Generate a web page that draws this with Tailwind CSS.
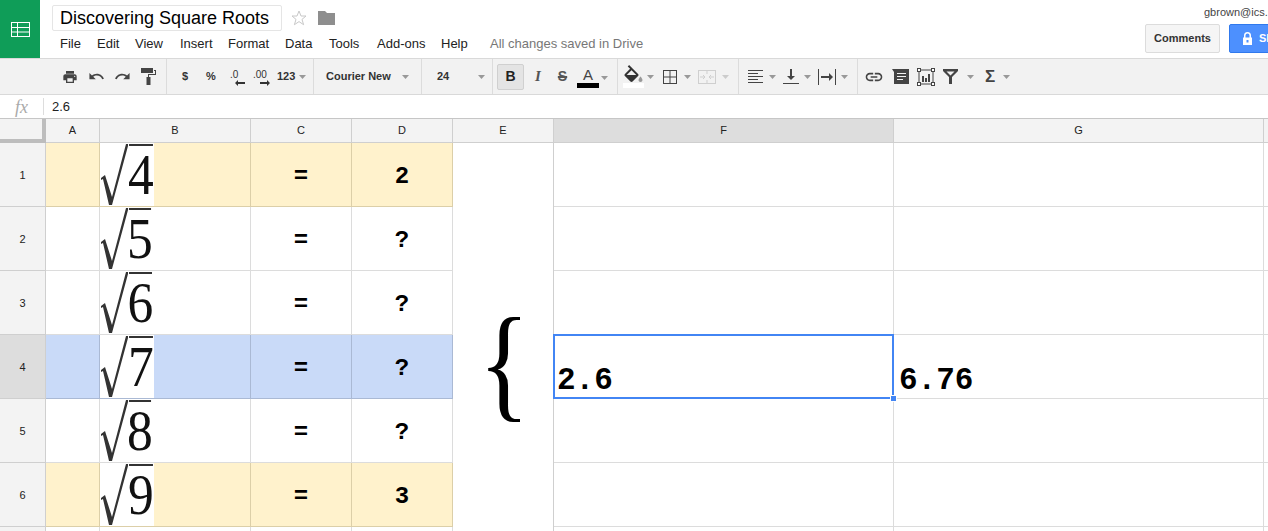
<!DOCTYPE html>
<html>
<head>
    <meta charset="UTF-8" />
    <title>Discovering Square Roots</title>
    <script src="https://cdn.jsdelivr.net/npm/@tailwindcss/browser@4"></script>
</head>

<body class="w-[1268px] h-[531px] overflow-hidden bg-white font-['Liberation_Sans',sans-serif] text-[#222]">

    <!-- Title bar -->
    <header class="flex h-[58px] relative">
        <div class="w-[40px] h-[58px] bg-[#0f9d58] flex items-center justify-center">
            <svg class="w-[19px] h-[15px]" viewBox="0 0 19 15" fill="none" stroke="#fff" stroke-width="1"><rect x="0.5" y="0.5" width="18" height="14"/><path d="M0 5.5h19M0 10h19M6.5 0v15"/></svg>
        </div>
        <div class="flex-1 pl-[12px]">
            <div class="flex items-center pt-[5px]">
                <div class="w-[230px] h-[26px] border border-[#e5e5e5] rounded-[2px] pl-[7px] text-[18px] leading-[24px] text-black">Discovering Square Roots</div>
                <svg class="w-[16px] h-[16px] ml-[9px]" viewBox="0 0 16 16" fill="none" stroke="#c8c8c8" stroke-width="1"><path d="M8 1l2 5h5l-4 3.4 1.6 5.3L8 11.6l-4.6 3.1L5 9.400 1 6h5z"/></svg>
                <svg class="w-[17px] h-[14px] ml-[11px]" viewBox="0 0 17 14" fill="#8e8e8e"><path d="M0 0h7l2 2h8v12H0z"/></svg>
            </div>
            <nav class="flex text-[13px] leading-[15px] mt-[5px] pl-[8px] text-[#222]">
                <span class="w-[37px]">File</span>
                <span class="w-[38px]">Edit</span>
                <span class="w-[45px]">View</span>
                <span class="w-[48px]">Insert</span>
                <span class="w-[57px]">Format</span>
                <span class="w-[44px]">Data</span>
                <span class="w-[48px]">Tools</span>
                <span class="w-[64px]">Add-ons</span>
                <span class="w-[49px]">Help</span>
                <span class="text-[#777]">All changes saved in Drive</span>
            </nav>
        </div>
        <div class="absolute left-[1204px] top-[6px] text-[11px] leading-[13px] text-[#444] whitespace-nowrap">gbrown@ics.mit.edu</div>
        <div class="absolute left-[1145px] top-[24px] w-[75px] h-[29px] bg-[#f5f5f5] border border-[#dcdcdc] rounded-[2px] text-[11px] font-bold leading-[27px] text-center text-[#333]">Comments</div>
        <div class="absolute left-[1229px] top-[24px] w-[70px] h-[29px] bg-[#4d90fe] border border-[#3079ed] rounded-[2px] text-[11px] font-bold leading-[27px] text-white flex items-center pl-[12px]">
            <svg class="w-[11px] h-[13px] mr-[6px]" viewBox="0 0 11 13" fill="#fff"><path d="M1 5.500h1V3.500a3.500 3.500 0 0 1 7 0v2h1v7.500H1zM3.500 5.500h4V3.500a2 2 0 0 0-4 0zM4.500 8h2v2.500h-2z" fill-rule="evenodd"/></svg>
            Share
        </div>
    </header>

    <!-- Toolbar -->
    <div class="flex h-[37px] border-y border-[#d9d9d9] bg-[#f2f2f2] text-[#333]">
        <div class="w-[167px] flex items-center pl-[62px] border-r border-[#dcdcdc]">
            <svg class="w-[16px] h-[16px]" viewBox="0 0 24 24" fill="#444"><path d="M19 8H5c-1.660 0-3 1.340-3 3v6h4v4h12v-4h4v-6c0-1.660-1.340-3-3-3zm-3 11H8v-5h8v5zm3-7c-.55 0-1-.45-1-1s.45-1 1-1 1 .45 1 1-.45 1-1 1zm-1-9H6v4h12V3z"/></svg>
            <svg class="w-[17px] h-[17px] ml-[10px]" viewBox="0 0 24 24" fill="#444"><path d="M12.500 8c-2.650 0-5.050.99-6.900 2.600L2 7v9h9l-3.620-3.620c1.390-1.160 3.160-1.880 5.120-1.880 3.540 0 6.550 2.310 7.600 5.500l2.370-.78C21.080 11.030 17.150 8 12.500 8z"/></svg>
            <svg class="w-[17px] h-[17px] ml-[9px]" viewBox="0 0 24 24" fill="#444"><path d="M18.400 10.600C16.550 8.990 14.150 8 11.500 8c-4.650 0-8.580 3.030-9.960 7.220L3.900 16c1.050-3.190 4.050-5.500 7.600-5.500 1.950 0 3.730.72 5.120 1.880L13 16h9V7l-3.600 3.600z"/></svg>
            <svg class="w-[15px] h-[17px] ml-[10px]" viewBox="0 0 15 17" fill="#444"><path d="M0 0h12v5H0zM13 2h2v5H8v2h1.500v8h-4V9H7V6h7V3h-1z"/></svg>
        </div>
        <div class="w-[147px] flex items-center pl-[15px] border-r border-[#dcdcdc] text-[11px] font-bold">
            <span class="w-[6px]">$</span>
            <span class="ml-[18px] w-[10px]">%</span>
            <span class="relative ml-[14px] w-[16px] h-[18px] font-normal text-[10px] leading-[14px]">.0
                <svg class="absolute left-[5px] top-[12px] w-[10px] h-[6px]" viewBox="0 0 10 6" fill="#333"><path d="M0 3l3-3v2h7v2H3v2z"/></svg>
            </span>
            <span class="relative ml-[7px] w-[18px] h-[18px] font-normal text-[10px] leading-[14px]">.00
                <svg class="absolute left-[7px] top-[12px] w-[10px] h-[6px]" viewBox="0 0 10 6" fill="#333"><path d="M10 3L7 0v2H0v2h7v2z"/></svg>
            </span>
            <span class="ml-[6px] w-[20px]">123</span>
            <svg class="w-[7px] h-[4px] ml-[2px]" viewBox="0 0 7 4" fill="#999"><path d="M0 0h7L3.500 4z"/></svg>
        </div>
        <div class="w-[108px] flex items-center pl-[12px] border-r border-[#dcdcdc] text-[11px] font-bold">
            <span class="w-[76px]">Courier New</span>
            <svg class="w-[7px] h-[4px]" viewBox="0 0 7 4" fill="#999"><path d="M0 0h7L3.500 4z"/></svg>
        </div>
        <div class="w-[71px] flex items-center pl-[15px] border-r border-[#dcdcdc] text-[11px] font-bold">
            <span class="w-[41px]">24</span>
            <svg class="w-[7px] h-[4px]" viewBox="0 0 7 4" fill="#999"><path d="M0 0h7L3.500 4z"/></svg>
        </div>
        <div class="w-[125px] flex items-center pl-[4px] border-r border-[#dcdcdc]">
            <span class="w-[27px] h-[26px] border border-[#d0d0d0] rounded-[2px] bg-[#e4e4e4] text-[14px] font-bold flex items-center justify-center text-[#222]">B</span>
            <span class="w-[10px] ml-[9px] text-[15px] font-bold italic font-['Liberation_Serif',serif] text-[#555] text-center">I</span>
            <span class="w-[13px] ml-[13px] text-[14px] font-bold text-[#555] text-center line-through decoration-2 decoration-[#555]">S</span>
            <span class="flex flex-col items-center w-[22px] ml-[8px]">
                <span class="text-[15px] leading-[17px] text-[#444]">A</span>
                <span class="w-[22px] h-[5px] bg-black"></span>
            </span>
            <svg class="w-[7px] h-[4px] ml-[2px] mt-[3px]" viewBox="0 0 7 4" fill="#999"><path d="M0 0h7L3.500 4z"/></svg>
        </div>
        <div class="w-[121px] flex items-center pl-[5px] border-r border-[#dcdcdc]">
            <span class="flex flex-col items-center w-[21px]">
                <svg class="w-[21px] h-[18px]" viewBox="2 0 20 18" fill="#333"><path d="M16.560 8.940L7.620 0 6.210 1.410l2.380 2.380-5.150 5.150c-.59.59-.59 1.540 0 2.120l5.500 5.500c.29.29.68.44 1.060.44s.77-.15 1.060-.44l5.500-5.500c.59-.58.59-1.530 0-2.120zM5.210 10L10 5.210 14.790 10H5.210z"/><path fill="#999" d="M19 11.500s-2 2.170-2 3.500c0 1.100.9 2 2 2s2-.9 2-2c0-1.330-2-3.500-2-3.500z"/></svg>
                <span class="w-[21px] h-[5px] bg-white"></span>
            </span>
            <svg class="w-[7px] h-[4px] ml-[3px]" viewBox="0 0 7 4" fill="#999"><path d="M0 0h7L3.500 4z"/></svg>
            <svg class="w-[14px] h-[14px] ml-[9px]" viewBox="0 0 14 14" fill="none" stroke="#444"><rect x="0.500" y="0.500" width="13" height="13"/><path d="M7 0v14M0 7h14"/></svg>
            <svg class="w-[7px] h-[4px] ml-[7px]" viewBox="0 0 7 4" fill="#999"><path d="M0 0h7L3.500 4z"/></svg>
            <svg class="w-[18px] h-[14px] ml-[7px]" viewBox="0 0 18 14" fill="none" stroke="#cfcfcf"><rect x="0.500" y="0.500" width="17" height="13"/><path d="M9 0v4M9 10v4M2 7h5M11 7h5M5 5l2 2-2 2M13 5l-2 2 2 2"/></svg>
            <svg class="w-[7px] h-[4px] ml-[6px]" viewBox="0 0 7 4" fill="#ccc"><path d="M0 0h7L3.500 4z"/></svg>
        </div>
        <div class="w-[119px] flex items-center pl-[9px] border-r border-[#dcdcdc]">
            <svg class="w-[15px] h-[13px]" viewBox="0 0 15 13" fill="none" stroke="#444"><path d="M0 .5h15M0 3.500h10M0 6.500h15M0 9.500h10M0 12.500h15"/></svg>
            <svg class="w-[7px] h-[4px] ml-[6px]" viewBox="0 0 7 4" fill="#999"><path d="M0 0h7L3.500 4z"/></svg>
            <svg class="w-[16px] h-[15px] ml-[7px]" viewBox="0 0 16 15" fill="#444"><path d="M7 0h2v7h3l-4 4-4-4h3zM0 14h16v1H0z"/></svg>
            <svg class="w-[7px] h-[4px] ml-[5px]" viewBox="0 0 7 4" fill="#999"><path d="M0 0h7L3.500 4z"/></svg>
            <svg class="w-[18px] h-[16px] ml-[7px]" viewBox="0 0 18 16" fill="#444"><path d="M0 0h1v16H0zM17 0h1v16h-1zM3 7h8V4l4 4-4 4V9H3z"/></svg>
            <svg class="w-[7px] h-[4px] ml-[5px]" viewBox="0 0 7 4" fill="#999"><path d="M0 0h7L3.500 4z"/></svg>
        </div>
        <div class="flex-1 flex items-center pl-[6px]">
            <svg class="w-[20px] h-[20px]" viewBox="0 0 24 24" fill="#444"><path d="M3.900 12c0-1.710 1.390-3.100 3.100-3.100h4V7H7c-2.760 0-5 2.240-5 5s2.240 5 5 5h4v-1.900H7c-1.710 0-3.100-1.390-3.100-3.100zM8 13h8v-2H8v2zm9-6h-4v1.900h4c1.710 0 3.100 1.390 3.100 3.100s-1.390 3.100-3.100 3.100h-4V17h4c2.760 0 5-2.240 5-5s-2.240-5-5-5z"/></svg>
            <svg class="w-[17px] h-[15px] ml-[8px]" viewBox="0 0 17 15" fill="#444" fill-rule="evenodd"><path d="M0 0h17v15H2V3zM5 4v1h9V4zM5 7v1h9V7zM5 10v1h6v-1z"/></svg>
            <svg class="w-[18px] h-[18px] ml-[8px]" viewBox="0 0 18 18" fill="none" stroke="#444"><rect x="2" y="2" width="14" height="14"/><path fill="#444" stroke="none" d="M5 8h2v6H5zM8 10h2v4H8zM11 6h2v8h-2z"/><rect x="0.500" y="0.500" width="3" height="3" fill="#fff"/><rect x="14.500" y="0.500" width="3" height="3" fill="#fff"/><rect x="0.500" y="14.500" width="3" height="3" fill="#fff"/><rect x="14.500" y="14.500" width="3" height="3" fill="#fff"/></svg>
            <svg class="w-[15px] h-[15px] ml-[8px]" viewBox="0 0 15 15" fill="#444" fill-rule="evenodd"><path d="M0 0h15v2L9 8v7H6V8L0 2zM3.500 2.500l4 4 4-4z"/></svg>
            <svg class="w-[7px] h-[4px] ml-[9px]" viewBox="0 0 7 4" fill="#999"><path d="M0 0h7L3.500 4z"/></svg>
            <span class="w-[11px] ml-[11px] text-[17px] font-bold leading-none text-[#444]">Σ</span>
            <svg class="w-[7px] h-[4px] ml-[7px]" viewBox="0 0 7 4" fill="#999"><path d="M0 0h7L3.500 4z"/></svg>
        </div>
    </div>

    <!-- Formula bar -->
    <div class="flex items-center h-[24px] border-b border-[#c6c6c6] bg-white">
        <span class="w-[43px] pl-[15px] font-['Liberation_Serif',serif] italic text-[18px] leading-[20px] text-[#aaa]">fx</span>
        <span class="w-px h-[17px] bg-[#ddd]"></span>
        <span class="pl-[8px] text-[13px] text-[#222]">2.6</span>
    </div>

    <!-- Grid -->
    <div class="grid grid-cols-[46px_54px_151px_101px_101px_101px_340px_370px_4px] grid-rows-[24px_repeat(7,64px)] text-center">
        <!-- column headers -->
        <div class="bg-[#f3f3f3] border-r-4 border-b-4 border-[#bdbdbd]"></div>
        <div class="bg-[#f3f3f3] border-r border-b border-[#cfcfcf] text-[11px] leading-[23px] text-[#222]">A</div>
        <div class="bg-[#f3f3f3] border-r border-b border-[#cfcfcf] text-[11px] leading-[23px] text-[#222]">B</div>
        <div class="bg-[#f3f3f3] border-r border-b border-[#cfcfcf] text-[11px] leading-[23px] text-[#222]">C</div>
        <div class="bg-[#f3f3f3] border-r border-b border-[#cfcfcf] text-[11px] leading-[23px] text-[#222]">D</div>
        <div class="bg-[#f3f3f3] border-r border-b border-[#cfcfcf] text-[11px] leading-[23px] text-[#222]">E</div>
        <div class="bg-[#dddddd] border-r border-b border-[#cfcfcf] text-[11px] leading-[23px] text-[#222]">F</div>
        <div class="bg-[#f3f3f3] border-r border-b border-[#cfcfcf] text-[11px] leading-[23px] text-[#222]">G</div>
        <div class="bg-[#f3f3f3] border-b border-[#cfcfcf]"></div>

        <!-- row 1 -->
        <div class="bg-[#f3f3f3] border-r border-b border-[#cfcfcf] text-[11px] leading-[64px]">1</div>
        <div class="bg-[#fff2cc] border-r border-b border-[#dccfa8]"></div>
        <div class="bg-[#fff2cc] border-r border-b border-[#dccfa8]">
            <div class="flex h-full w-[54px] bg-white overflow-hidden">
                <svg class="w-[28px] h-[63px] shrink-0" viewBox="0 0 28 63" fill="#333"><path d="M1 35l4-3 7 22L26 1h2v2L12 62H9L3 36l-2 1z"/></svg>
                <div class="w-[26px] h-[62px] mt-px border-t-2 border-[#333] flex justify-center font-['Liberation_Serif',serif] text-[56px] leading-[58px] text-[#111] scale-x-[0.92]">4</div>
            </div>
        </div>
        <div class="bg-[#fff2cc] border-r border-b border-[#dccfa8] font-['Liberation_Mono',monospace] font-bold text-[24px] leading-[67px] text-black">=</div>
        <div class="bg-[#fff2cc] border-r border-b border-[#dccfa8] font-['Liberation_Mono',monospace] font-bold text-[24px] leading-[67px] text-black">2</div>
        <div class="border-r border-[#cfcfcf]"></div>
        <div class="border-r border-b border-[#dcdcdc]"></div>
        <div class="border-r border-b border-[#dcdcdc]"></div>
        <div class="border-b border-[#dcdcdc]"></div>

        <!-- row 2 -->
        <div class="bg-[#f3f3f3] border-r border-b border-[#cfcfcf] text-[11px] leading-[64px]">2</div>
        <div class="border-r border-b border-[#dcdcdc]"></div>
        <div class="border-r border-b border-[#dcdcdc]">
            <div class="flex h-full w-[54px] bg-white overflow-hidden">
                <svg class="w-[28px] h-[63px] shrink-0" viewBox="0 0 28 63" fill="#333"><path d="M1 35l4-3 7 22L26 1h2v2L12 62H9L3 36l-2 1z"/></svg>
                <div class="w-[24px] h-[62px] mt-px border-t-2 border-[#333] flex justify-center font-['Liberation_Serif',serif] text-[56px] leading-[58px] text-[#111] scale-x-[0.92]">5</div>
            </div>
        </div>
        <div class="border-r border-b border-[#dcdcdc] font-['Liberation_Mono',monospace] font-bold text-[24px] leading-[67px] text-black">=</div>
        <div class="border-r border-b border-[#dcdcdc] font-['Liberation_Mono',monospace] font-bold text-[24px] leading-[67px] text-black">?</div>
        <div class="border-r border-[#cfcfcf]"></div>
        <div class="border-r border-b border-[#dcdcdc]"></div>
        <div class="border-r border-b border-[#dcdcdc]"></div>
        <div class="border-b border-[#dcdcdc]"></div>

        <!-- row 3 -->
        <div class="bg-[#f3f3f3] border-r border-b border-[#cfcfcf] text-[11px] leading-[64px]">3</div>
        <div class="border-r border-b border-[#dcdcdc]"></div>
        <div class="border-r border-b border-[#dcdcdc]">
            <div class="flex h-full w-[54px] bg-white overflow-hidden">
                <svg class="w-[28px] h-[63px] shrink-0" viewBox="0 0 28 63" fill="#333"><path d="M1 35l4-3 7 22L26 1h2v2L12 62H9L3 36l-2 1z"/></svg>
                <div class="w-[25px] h-[62px] mt-px border-t-2 border-[#333] flex justify-center font-['Liberation_Serif',serif] text-[56px] leading-[58px] text-[#111] scale-x-[0.92]">6</div>
            </div>
        </div>
        <div class="border-r border-b border-[#dcdcdc] font-['Liberation_Mono',monospace] font-bold text-[24px] leading-[67px] text-black">=</div>
        <div class="border-r border-b border-[#dcdcdc] font-['Liberation_Mono',monospace] font-bold text-[24px] leading-[67px] text-black">?</div>
        <div class="border-r border-[#cfcfcf]"></div>
        <div class="border-r border-b border-[#dcdcdc]"></div>
        <div class="border-r border-b border-[#dcdcdc]"></div>
        <div class="border-b border-[#dcdcdc]"></div>

        <!-- row 4, active -->
        <div class="bg-[#dddddd] border-r border-b border-[#cfcfcf] text-[11px] leading-[64px]">4</div>
        <div class="bg-[#c9daf8] border-r border-b border-[#aab9d4]"></div>
        <div class="bg-[#c9daf8] border-r border-b border-[#aab9d4]">
            <div class="flex h-full w-[54px] bg-white overflow-hidden">
                <svg class="w-[28px] h-[63px] shrink-0" viewBox="0 0 28 63" fill="#333"><path d="M1 35l4-3 7 22L26 1h2v2L12 62H9L3 36l-2 1z"/></svg>
                <div class="w-[26px] h-[62px] mt-px border-t-2 border-[#333] flex justify-center font-['Liberation_Serif',serif] text-[56px] leading-[58px] text-[#111] scale-x-[0.92]">7</div>
            </div>
        </div>
        <div class="bg-[#c9daf8] border-r border-b border-[#aab9d4] font-['Liberation_Mono',monospace] font-bold text-[24px] leading-[67px] text-black">=</div>
        <div class="bg-[#c9daf8] border-r border-b border-[#aab9d4] font-['Liberation_Mono',monospace] font-bold text-[24px] leading-[67px] text-black">?</div>
        <div class="relative border-r border-[#cfcfcf]">
            <span class="absolute left-[1px] top-[-36px] w-[100px] text-center font-['Liberation_Serif',serif] text-[127px] leading-[127px] text-black scale-x-[0.84]">{</span>
        </div>
        <div class="relative border-r border-b border-[#dcdcdc] text-left pl-[3px] pt-[26px] font-['Liberation_Mono',monospace] font-bold text-[31px] leading-[40px] text-black">
            2.6
            <div class="absolute -left-px -top-px -right-px -bottom-px border-2 border-[#4285f4]"></div>
            <div class="absolute right-[-4px] bottom-[-4px] w-[7px] h-[7px] bg-[#4285f4] border border-white"></div>
        </div>
        <div class="border-r border-b border-[#dcdcdc] text-left pl-[5px] pt-[26px] font-['Liberation_Mono',monospace] font-bold text-[31px] leading-[40px] text-black">6.76</div>
        <div class="border-b border-[#dcdcdc]"></div>

        <!-- row 5 -->
        <div class="bg-[#f3f3f3] border-r border-b border-[#cfcfcf] text-[11px] leading-[64px]">5</div>
        <div class="border-r border-b border-[#dcdcdc]"></div>
        <div class="border-r border-b border-[#dcdcdc]">
            <div class="flex h-full w-[54px] bg-white overflow-hidden">
                <svg class="w-[28px] h-[63px] shrink-0" viewBox="0 0 28 63" fill="#333"><path d="M1 35l4-3 7 22L26 1h2v2L12 62H9L3 36l-2 1z"/></svg>
                <div class="w-[24px] h-[62px] mt-px border-t-2 border-[#333] flex justify-center font-['Liberation_Serif',serif] text-[56px] leading-[58px] text-[#111] scale-x-[0.92]">8</div>
            </div>
        </div>
        <div class="border-r border-b border-[#dcdcdc] font-['Liberation_Mono',monospace] font-bold text-[24px] leading-[67px] text-black">=</div>
        <div class="border-r border-b border-[#dcdcdc] font-['Liberation_Mono',monospace] font-bold text-[24px] leading-[67px] text-black">?</div>
        <div class="border-r border-[#cfcfcf]"></div>
        <div class="border-r border-b border-[#dcdcdc]"></div>
        <div class="border-r border-b border-[#dcdcdc]"></div>
        <div class="border-b border-[#dcdcdc]"></div>

        <!-- row 6 -->
        <div class="bg-[#f3f3f3] border-r border-b border-[#cfcfcf] text-[11px] leading-[64px]">6</div>
        <div class="bg-[#fff2cc] border-r border-b border-[#dccfa8]"></div>
        <div class="bg-[#fff2cc] border-r border-b border-[#dccfa8]">
            <div class="flex h-full w-[54px] bg-white overflow-hidden">
                <svg class="w-[28px] h-[63px] shrink-0" viewBox="0 0 28 63" fill="#333"><path d="M1 35l4-3 7 22L26 1h2v2L12 62H9L3 36l-2 1z"/></svg>
                <div class="w-[26px] h-[62px] mt-px border-t-2 border-[#333] flex justify-center font-['Liberation_Serif',serif] text-[56px] leading-[58px] text-[#111] scale-x-[0.92]">9</div>
            </div>
        </div>
        <div class="bg-[#fff2cc] border-r border-b border-[#dccfa8] font-['Liberation_Mono',monospace] font-bold text-[24px] leading-[67px] text-black">=</div>
        <div class="bg-[#fff2cc] border-r border-b border-[#dccfa8] font-['Liberation_Mono',monospace] font-bold text-[24px] leading-[67px] text-black">3</div>
        <div class="border-r border-[#cfcfcf]"></div>
        <div class="border-r border-b border-[#dcdcdc]"></div>
        <div class="border-r border-b border-[#dcdcdc]"></div>
        <div class="border-b border-[#dcdcdc]"></div>

        <!-- row 7, cut off by the window -->
        <div class="bg-[#f3f3f3] border-r border-[#cfcfcf]"></div>
        <div class="border-r border-[#dcdcdc]"></div>
        <div class="border-r border-[#dcdcdc]"></div>
        <div class="border-r border-[#dcdcdc]"></div>
        <div class="border-r border-[#dcdcdc]"></div>
        <div class="border-r border-[#cfcfcf]"></div>
        <div class="border-r border-[#dcdcdc]"></div>
        <div class="border-r border-[#dcdcdc]"></div>
        <div></div>
    </div>

</body>
</html>
